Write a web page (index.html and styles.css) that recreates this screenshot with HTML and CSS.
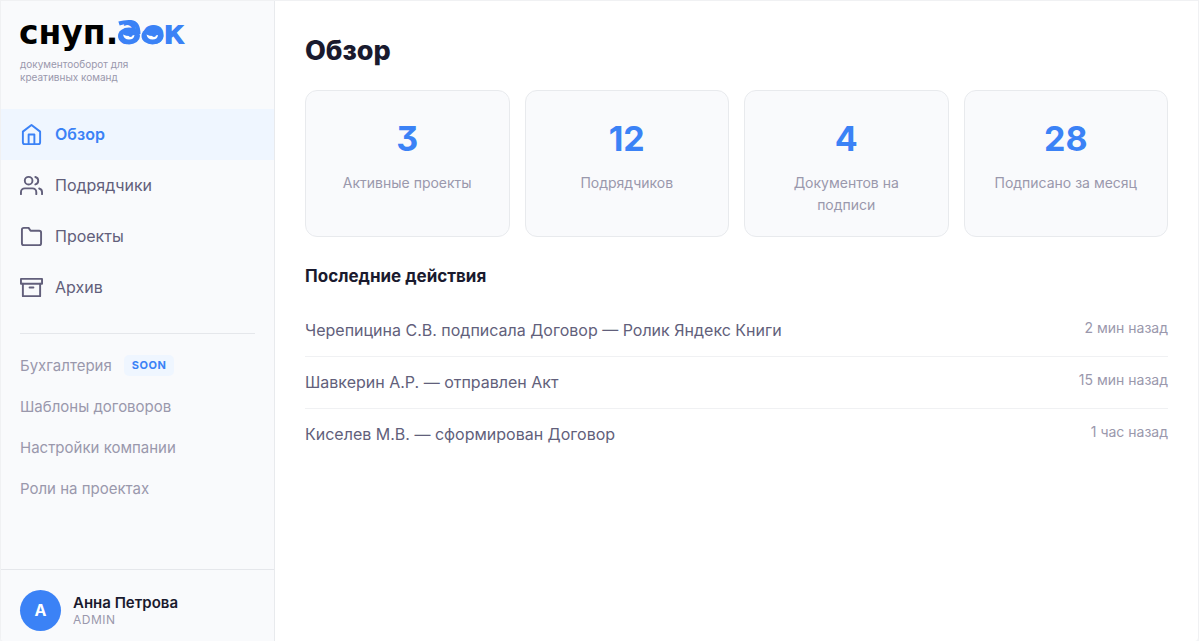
FILE: index.html
```html
<!DOCTYPE html>
<html lang="ru">
  <head>
    <meta charset="UTF-8" />
    <meta name="viewport" content="width=device-width, initial-scale=1" />
    <title>снуп.док</title>
    <link rel="stylesheet" href="styles.css">
  </head>
  <body>
    <div class="app">
      <aside class="sidebar">
        <div class="brand">
          <svg class="logo" width="180" height="34" viewBox="0 0 180 34" role="img" aria-label="снуп.док">
            <text class="logo-text" x="-1" y="25">снуп.</text>
            <text class="logo-text logo-accent" x="99" y="25">∂</text>
            <text class="logo-text logo-accent" x="122" y="25">о</text>
            <text class="logo-text logo-accent" x="143" y="25">к</text>
            <!-- глаза и бровь -->
            <path class="brow" d="M99 4.500q6-2 12-1.500q7.500 1 7.500 12" />
            <ellipse class="eye" cx="109" cy="17" rx="11" ry="8.500" />
            <path class="eye-white" d="M103 15.500q3 1.500 6.500 1.500l5-1q-.5 4.500-5.500 4.500q-5 0-6-5z" />
            <circle class="eye" cx="110.500" cy="16" r="2" />
            <ellipse class="eye" cx="132.500" cy="17" rx="11" ry="8.500" />
            <path class="eye-white" d="M126.500 15.500q3 1.500 6.500 1.500l5-1q-.5 4.500-5.500 4.500q-5 0-6-5z" />
            <circle class="eye" cx="134" cy="16" r="2" />
          </svg>
          <p class="tagline">документооборот для<br>креативных команд</p>
        </div>

        <nav class="nav" aria-label="Основное меню">
          <a class="nav-item active" href="#overview">
            <svg class="icon" viewBox="0 0 24 24"><path d="M3 9l9-7 9 7v11a2 2 0 0 1-2 2H5a2 2 0 0 1-2-2z" /><path d="M9 22V12h6v10" /></svg>
            <span>Обзор</span>
          </a>
          <a class="nav-item" href="#contractors">
            <svg class="icon" viewBox="0 0 24 24"><path d="M17 21v-2a4 4 0 0 0-4-4H5a4 4 0 0 0-4 4v2" /><circle cx="9" cy="7" r="4" /><path d="M23 21v-2a4 4 0 0 0-3-3.870" /><path d="M16 3.130a4 4 0 0 1 0 7.750" /></svg>
            <span>Подрядчики</span>
          </a>
          <a class="nav-item" href="#projects">
            <svg class="icon" viewBox="0 0 24 24"><path d="M22 19a2 2 0 0 1-2 2H4a2 2 0 0 1-2-2V5a2 2 0 0 1 2-2h5l2 3h9a2 2 0 0 1 2 2z" /></svg>
            <span>Проекты</span>
          </a>
          <a class="nav-item" href="#archive">
            <svg class="icon" viewBox="0 0 24 24"><path d="M21 8v13H3V8" /><path d="M1 3h22v5H1z" /><path d="M10 12h4" /></svg>
            <span>Архив</span>
          </a>
        </nav>

        <nav class="subnav" aria-label="Дополнительно">
          <a href="#accounting">Бухгалтерия <span class="badge">SOON</span></a>
          <a href="#templates">Шаблоны договоров</a>
          <a href="#company">Настройки компании</a>
          <a href="#roles">Роли на проектах</a>
        </nav>

        <div class="user">
          <div class="avatar">А</div>
          <div>
            <div class="user-name">Анна Петрова</div>
            <div class="user-role">ADMIN</div>
          </div>
        </div>
      </aside>

      <main class="main" id="overview">
        <h1>Обзор</h1>
        <div class="stats">
          <div class="stat">
            <div class="stat-value">3</div>
            <div class="stat-label">Активные проекты</div>
          </div>
          <div class="stat">
            <div class="stat-value">12</div>
            <div class="stat-label">Подрядчиков</div>
          </div>
          <div class="stat">
            <div class="stat-value">4</div>
            <div class="stat-label">Документов на подписи</div>
          </div>
          <div class="stat">
            <div class="stat-value">28</div>
            <div class="stat-label">Подписано за месяц</div>
          </div>
        </div>

        <h2>Последние действия</h2>
        <ul class="activity">
          <li><span>Черепицина С.В. подписала Договор — Ролик Яндекс Книги</span><time>2 мин назад</time></li>
          <li><span>Шавкерин А.Р. — отправлен Акт</span><time>15 мин назад</time></li>
          <li><span>Киселев М.В. — сформирован Договор</span><time>1 час назад</time></li>
        </ul>
      </main>
    </div>
  </body>
</html>
```

FILE: styles.css
```css
* {
  box-sizing: border-box;
  margin: 0;
  padding: 0;
}

body {
  font-family: Inter, "Liberation Sans", sans-serif;
  font-size: 16px;
  color: #1a1a2e;
  background: #f3f4f6;
}

a {
  color: inherit;
  text-decoration: none;
}

.app {
  display: grid;
  grid-template-columns: 274px 1fr;
  min-height: 100vh;
  border: 1px solid #f0f1f3;
  border-bottom: none;
  border-radius: 0 0 4px 4px;
  background: #fff;
  overflow: hidden;
}

/* Боковая панель */
.sidebar {
  display: flex;
  flex-direction: column;
  background: #f9fafc;
  border-right: 1px solid #e8eaed;
}

.brand {
  padding: 18px 19px 24px;
}

.logo {
  display: block;
  overflow: visible;
}

.logo-text {
  font-family: "DejaVu Sans", sans-serif;
  font-size: 33px;
  font-weight: 700;
  fill: #000;
}

.logo-accent,
.eye {
  fill: #3b82f6;
}

.eye-white {
  fill: #fff;
}

.brow {
  fill: none;
  stroke: #3b82f6;
  stroke-width: 4;
}

.tagline {
  margin-top: 5px;
  font-size: 10px;
  line-height: 13px;
  color: #9a98ac;
}

.nav {
  margin-top: 1px;
}

.nav-item {
  display: flex;
  align-items: center;
  gap: 12px;
  padding: 12px 19px;
  line-height: 27px;
  color: #625f7b;
}

.nav-item.active {
  background: #eff6ff;
  color: #3b82f6;
  font-weight: 600;
}

.icon {
  width: 23px;
  height: 23px;
  fill: none;
  stroke: currentColor;
  stroke-width: 2;
  stroke-linecap: round;
  stroke-linejoin: round;
}

.subnav {
  margin: 20px 19px;
  padding-top: 11px;
  border-top: 1px solid #e5e7eb;
}

.subnav a {
  display: flex;
  align-items: center;
  gap: 12px;
  padding: 10px 0;
  font-size: 15px;
  line-height: 21px;
  color: #9a98ac;
}

.badge {
  padding: 0 8px;
  border-radius: 5px;
  background: #eff6ff;
  color: #3b82f6;
  font-size: 11px;
  font-weight: 700;
  letter-spacing: 0.5px;
}

.user {
  display: flex;
  align-items: center;
  gap: 12px;
  margin-top: auto;
  padding: 20px 19px 10px;
  border-top: 1px solid #e5e7eb;
}

.avatar {
  width: 41px;
  height: 41px;
  border-radius: 50%;
  background: #3b82f6;
  color: #fff;
  font-weight: 700;
  line-height: 41px;
  text-align: center;
}

.user-name {
  font-size: 15px;
  font-weight: 600;
  line-height: 18px;
}

.user-role {
  font-size: 12px;
  line-height: 16px;
  letter-spacing: 0.5px;
  color: #9a98ac;
}

/* Основная часть */
.main {
  padding: 30px;
}

h1 {
  margin-bottom: 19px;
  font-size: 27px;
  font-weight: 800;
  line-height: 40px;
}

.stats {
  display: grid;
  grid-template-columns: repeat(4, 1fr);
  gap: 15px;
}

.stat {
  padding: 20px;
  border: 1px solid #e8eaed;
  border-radius: 12px;
  background: #f9fafc;
  text-align: center;
}

.stat-value {
  margin-bottom: 5px;
  color: #3b82f6;
  font-size: 34px;
  font-weight: 700;
  font-feature-settings: "cv09";
  line-height: 56px;
}

.stat-label {
  font-size: 14px;
  line-height: 22px;
  color: #9a98ac;
}

h2 {
  margin: 25px 0 14px;
  font-size: 17px;
  font-weight: 700;
  line-height: 29px;
}

.activity {
  list-style: none;
}

.activity li {
  display: flex;
  justify-content: space-between;
  padding: 12px 0;
  border-bottom: 1px solid #f0f1f3;
  line-height: 27px;
  color: #625f7b;
}

.activity li:last-child {
  border-bottom: none;
}

.activity time {
  font-size: 14px;
  line-height: 22px;
  color: #9a98ac;
}
```
